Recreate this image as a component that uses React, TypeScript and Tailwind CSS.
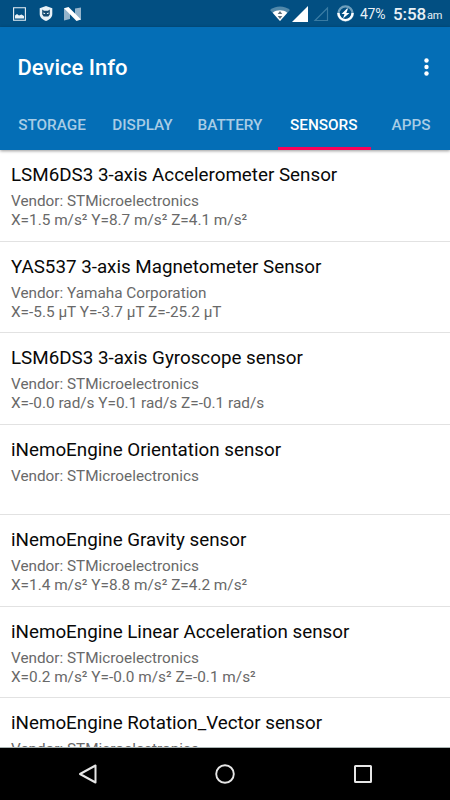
import React from "react";

type Sensor = { name: string; vendor: string; values: string; height: string };

const sensors: Sensor[] = [
  { name: "LSM6DS3 3-axis Accelerometer Sensor", vendor: "STMicroelectronics", values: "X=1.5 m/s² Y=8.7 m/s² Z=4.1 m/s²", height: "h-[92px]" },
  { name: "YAS537 3-axis Magnetometer Sensor", vendor: "Yamaha Corporation", values: "X=-5.5 μT Y=-3.7 μT Z=-25.2 μT", height: "h-[91px]" },
  { name: "LSM6DS3 3-axis Gyroscope sensor", vendor: "STMicroelectronics", values: "X=-0.0 rad/s Y=0.1 rad/s Z=-0.1 rad/s", height: "h-[92px]" },
  { name: "iNemoEngine Orientation sensor", vendor: "STMicroelectronics", values: "", height: "h-[90px]" },
  { name: "iNemoEngine Gravity sensor", vendor: "STMicroelectronics", values: "X=1.4 m/s² Y=8.8 m/s² Z=4.2 m/s²", height: "h-[92px]" },
  { name: "iNemoEngine Linear Acceleration sensor", vendor: "STMicroelectronics", values: "X=0.2 m/s² Y=-0.0 m/s² Z=-0.1 m/s²", height: "h-[91px]" },
  { name: "iNemoEngine Rotation_Vector sensor", vendor: "STMicroelectronics", values: "", height: "h-[92px]" },
];

const tabs = [
  { label: "STORAGE", width: "w-[103px]" },
  { label: "DISPLAY", width: "w-[78px]" },
  { label: "BATTERY", width: "w-[97px]" },
  { label: "SENSORS", width: "w-[93px]" },
  { label: "APPS", width: "w-[79px]" },
];

function StatusBar() {
  return (
    <header className="flex h-[27px] shrink-0 items-center bg-[#024f82] pl-[13px] pr-[9px] text-[#e9f1f6]">
      <svg className="h-[14px] w-[13px]" viewBox="0 0 13 14">
        <path d="M.6.8h11.8v12.4H.6z" fill="none" stroke="currentColor" strokeWidth="1.1" />
        <path d="M2 11.5V8.500l2-1.500 2 1.600L8.500 7.500l2.500 1.600v2.400z" fill="currentColor" />
      </svg>
      <svg className="ml-[13px] h-[15px] w-[14px]" viewBox="0 0 14 15">
        <path d="M7 0l6.3 2.2V8c0 3.200-2.600 5.800-6.300 7C3.300 13.800.7 11.200.7 8V2.200z" fill="currentColor" />
        <path d="M3.200 3.500l1.800 1.300h4l1.800-1.300V8.500l-1.500 2H4.700l-1.500-2z" fill="#164b70" />
        <path d="M4.300 6.600l2 .6-.4.900H4.600zM9.700 6.600l-2 .6.4.900h1.300z" fill="currentColor" />
      </svg>
      <svg className="ml-[11px] h-[14px] w-[17px]" viewBox="0 0 17 14">
        <path d="M0 1l6 4v7l-6 1.500zM11 1.500L17 .5V13l-6-4z" fill="#94b4cb" />
        <path d="M0 1.200L4.500 0 17 12.600 12.500 14z" fill="#fff" />
      </svg>
      <svg className="ml-auto h-[15px] w-[20px]" viewBox="0 0 20 15">
        <path d="M0 4C5-.7 15-.7 20 4L10 15z" fill="#5289aa" />
        <path d="M2.700 6.700C7 3.500 13 3.500 17.300 6.700L10 15z" fill="#fff" />
        <path d="M10 5l2.300 3H7.700zM10 13L7.700 10h4.600z" fill="#61717b" />
      </svg>
      <svg className="ml-[2px] h-[16px] w-[16px]" viewBox="0 0 16 16">
        <path d="M16 0v16H0z" fill="#fff" />
      </svg>
      <svg className="ml-[5px] h-[16px] w-[16px]" viewBox="0 0 16 16">
        <path d="M14.500 2v12.500H2z" fill="none" stroke="#397ba3" strokeWidth="1.200" />
      </svg>
      <svg className="ml-[8px] h-[17px] w-[17px]" viewBox="0 0 17 17">
        <circle cx="8.500" cy="8.500" r="7.100" fill="none" stroke="#6e9fbd" strokeWidth="2.400" />
        <path d="M1.400 8A7.100 7.100 0 1 0 15.600 8" fill="none" stroke="#fff" strokeWidth="2.400" />
        <path d="M10 3.500L4.500 9h3l-1.500 4.500L12.500 8h-3.200L11 3.500z" fill="#fff" />
      </svg>
      <span className="ml-[6px] mt-px w-[25px] whitespace-nowrap text-[14px] leading-[27px] tracking-[-0.3px]">47%</span>
      <span className="ml-[8px] mt-px w-[33px] whitespace-nowrap text-[17px] font-medium leading-[27px] tracking-[-0.1px]">5:58</span>
      <span className="w-[15px] whitespace-nowrap pl-px pt-[5px] text-[11px] leading-[22px] tracking-[-0.3px]">am</span>
    </header>
  );
}

function AppBar() {
  return (
    <div className="relative z-10 shrink-0 bg-[#046eb6] shadow-[0_1px_3px_rgba(0,0,0,0.4)]">
      <div className="flex h-[75px] items-center justify-between pl-[17.500px] pr-[21.500px] pt-[5px] text-white">
        <h1 className="mt-px whitespace-nowrap text-[22px] font-medium">Device Info</h1>
        <svg className="h-[18px] w-[5px]" viewBox="0 0 5 18" fill="white">
          <circle cx="2.500" cy="2.500" r="2.200" />
          <circle cx="2.500" cy="9" r="2.200" />
          <circle cx="2.500" cy="15.500" r="2.200" />
        </svg>
      </div>
      <nav className="flex h-[48px]">
        {tabs.map((tab) => (
          <div
            key={tab.label}
            className={
              tab.width +
              " flex shrink-0 items-center justify-center whitespace-nowrap text-[15.300px] font-medium " +
              (tab.label === "SENSORS"
                ? "border-b-[3px] border-[#fb0359] pr-[1.500px] pt-[1px] text-white"
                : "pb-[2px] pl-px text-[#a8cce5]")
            }
          >
            {tab.label}
          </div>
        ))}
      </nav>
    </div>
  );
}

export default function App() {
  return (
    <div className="flex h-[800px] w-[450px] flex-col overflow-hidden bg-white font-['Roboto','Noto_Sans',sans-serif]">
      <StatusBar />
      <AppBar />
      <main className="min-h-0 flex-1 overflow-hidden border-b border-[#a9b4b3]">
        {sensors.map((s) => (
          <section key={s.name} className={s.height + " whitespace-nowrap border-b border-[#e2e2e2] pl-[11px] pt-[13px]"}>
            <h2 className="text-[18.800px] leading-[25px] text-[#080808]">{s.name}</h2>
            <p className="mt-[3px] text-[15.300px] leading-[20px] text-[#696969]">Vendor: {s.vendor}</p>
            <p className="-mt-px text-[15.350px] leading-[20px] text-[#696969]">{s.values}</p>
          </section>
        ))}
      </main>
      <footer className="flex h-[52px] shrink-0 items-center justify-between bg-black px-[78px]">
        <svg className="h-[20px] w-[19px]" viewBox="0 0 19 20">
          <path d="M17.500 1.500v17L2 10z" fill="none" stroke="#e6e6e6" strokeWidth="2" strokeLinejoin="round" />
        </svg>
        <svg className="mr-[1px] h-[20px] w-[20px]" viewBox="0 0 20 20">
          <circle cx="10" cy="10" r="8.800" fill="none" stroke="#e6e6e6" strokeWidth="1.900" />
        </svg>
        <svg className="h-[18px] w-[18px]" viewBox="0 0 18 18">
          <rect x="1" y="1" width="16" height="16" rx=".5" fill="none" stroke="#e6e6e6" strokeWidth="2" />
        </svg>
      </footer>
    </div>
  );
}
